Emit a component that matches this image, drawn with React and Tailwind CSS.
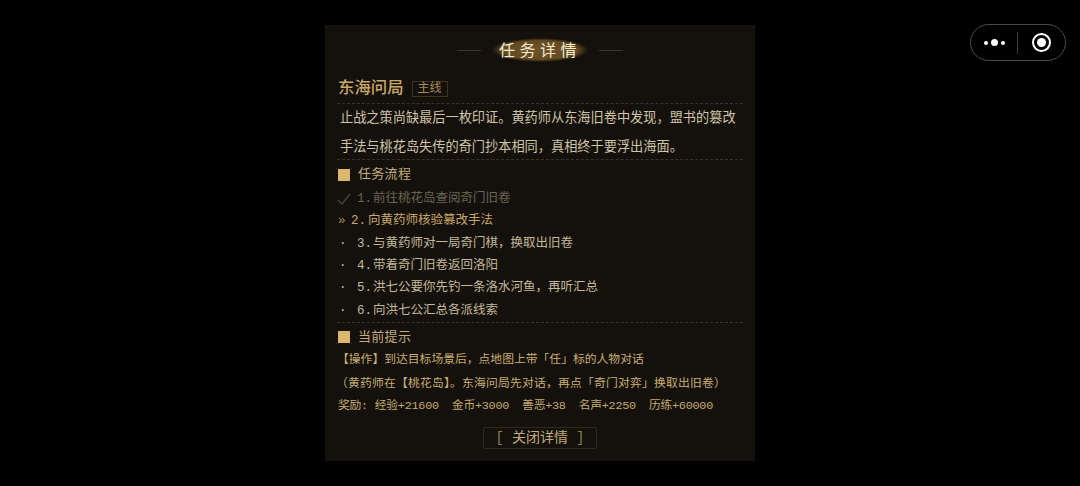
const cjk = "font-['Liberation_Mono','Noto_Sans_CJK_SC',monospace]";

const steps = [
  { num: "3.", text: "与黄药师对一局奇门棋，换取出旧卷" },
  { num: "4.", text: "带着奇门旧卷返回洛阳" },
  { num: "5.", text: "洪七公要你先钓一条洛水河鱼，再听汇总" },
  { num: "6.", text: "向洪七公汇总各派线索" },
];

const rewards = ["经验+21600", "金币+3000", "善恶+38", "名声+2250", "历练+60000"];

function Divider() {
  return <div className="border-t border-dashed border-[#3a3428]" />;
}

function SectionTitle({ children }) {
  return (
    <div className="flex items-center gap-[8px] h-[24px] pl-[1px]">
      <div className="w-[12px] h-[12px] bg-[#dcb76c]" />
      <span className="text-[13px] text-[#c2ab7c] tracking-[0.3px]">{children}</span>
    </div>
  );
}

function App() {
  return (
    <div className={`w-[1080px] h-[486px] bg-black overflow-hidden relative ${cjk}`}>

      {/* 小程序胶囊 */}
      <div className="absolute left-[970px] top-[24px] w-[96px] h-[37px] rounded-full border border-[#4a4a4a] flex items-center">
        <div className="w-[46px] flex items-center justify-center gap-[3px]">
          <div className="w-[4px] h-[4px] rounded-full bg-white" />
          <div className="w-[7px] h-[7px] rounded-full bg-white" />
          <div className="w-[4px] h-[4px] rounded-full bg-white" />
        </div>
        <div className="w-px h-[22px] bg-[#3c3c3c]" />
        <div className="flex-1 flex items-center justify-center">
          <div className="w-[19px] h-[19px] rounded-full border-2 border-white flex items-center justify-center">
            <div className="w-[9px] h-[9px] rounded-full bg-white" />
          </div>
        </div>
      </div>

      <div className="flex justify-center pt-[25px]">
        <div className="w-[430px] h-[436px] bg-[#14110c] px-[12px] flex flex-col">

          <div className="h-[50px] flex items-center justify-center shrink-0">
            <div className="w-[24px] h-px bg-[#3d3727]" />
            <div className="w-[96px] h-[24px] mx-[11px] flex items-center justify-center bg-[radial-gradient(ellipse_closest-side,#6e5228_0%,#634a22_78%,#14110c00_100%)]">
              <span className="text-[16px] leading-none text-[#f5ebd0] tracking-[4.5px] pt-[3px]">任务详情</span>
            </div>
            <div className="w-[24px] h-px bg-[#3d3727]" />
          </div>

          <div className="h-[28px] flex items-center gap-[8px] shrink-0 pl-[1px]">
            <span className="text-[16.4px] font-medium text-[#c9a868] leading-none">东海问局</span>
            <span className="h-[16px] px-[5px] flex items-center border border-[#3d3420] text-[12px] text-[#a98c52] leading-none">主线</span>
          </div>

          <Divider />

          <div className="h-[55px] px-[3px] text-[13.2px] leading-[29px] text-[#cfc4a6] whitespace-nowrap">
            <div>止战之策尚缺最后一枚印证。黄药师从东海旧卷中发现，盟书的篡改</div>
            <div>手法与桃花岛失传的奇门抄本相同，真相终于要浮出海面。</div>
          </div>

          <Divider />

          <div className="pt-[3px]">
            <SectionTitle>任务流程</SectionTitle>
          </div>

          <div className="pt-[1px] text-[12.5px] whitespace-nowrap">
            <div className="h-[22.4px] flex items-center text-[#6b6454]">
              <svg className="w-[14px] h-[14px] mr-[5px] shrink-0" viewBox="0 0 14 14" fill="none" stroke="#4a4438" strokeWidth="1.4">
                <path d="M1 8 L5 12 L13 2" />
              </svg>
              <span className="w-[17px] pl-[1px]">1.</span>
              <span>前往桃花岛查阅奇门旧卷</span>
            </div>
            <div className="h-[22.4px] flex items-center text-[#c9a868]">
              <span className="w-[14px] pl-[1px] text-[#a98c52]">»</span>
              <span className="w-[17px]">2.</span>
              <span>向黄药师核验篡改手法</span>
            </div>
            {steps.map((step) => (
              <div key={step.num} className="h-[22.4px] flex items-center text-[#c4b998]">
                <span className="w-[19px] pl-[2px]">·</span>
                <span className="w-[17px] pl-[1px]">{step.num}</span>
                <span>{step.text}</span>
              </div>
            ))}
          </div>

          <Divider />

          <div className="pt-[2px]">
            <SectionTitle>当前提示</SectionTitle>
          </div>

          <div className="text-[11.8px] text-[#c9ae72] whitespace-nowrap">
            <div className="h-[23px] leading-[23px]">【操作】到达目标场景后，点地图上带「任」标的人物对话</div>
            <div className="h-[23px] leading-[25px] -ml-[1px] tracking-[0.2px]">（黄药师在【桃花岛】。东海问局先对话，再点「奇门对弈」换取出旧卷）</div>
            <div className="h-[23px] leading-[23px] flex gap-[13px] pl-[1px] tracking-[-0.25px] text-[#c4a96e]">
              <span>奖励: {rewards[0]}</span>
              {rewards.slice(1).map((r) => (
                <span key={r}>{r}</span>
              ))}
            </div>
          </div>

          <div className="flex justify-center pt-[9px]">
            <div className="w-[114px] h-[22px] border border-[#2f2a1f] rounded-[2px] flex items-center justify-center gap-[8px] text-[14px] text-[#c2ab7c] leading-none">
              <span className="text-[#8d7c58]">[</span>
              <span>关闭详情</span>
              <span className="text-[#8d7c58]">]</span>
            </div>
          </div>

        </div>
      </div>

    </div>
  );
}

export default App;
